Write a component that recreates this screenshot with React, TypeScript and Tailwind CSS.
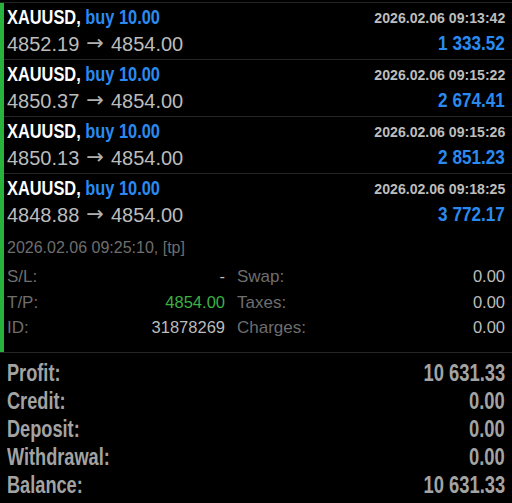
import React from "react";

interface Deal {
  symbol: string;
  side: string;
  open: string;
  close: string;
  time: string;
  profit: string;
}

const deals: Deal[] = [
  { symbol: "XAUUSD", side: "buy 10.00", open: "4852.19", close: "4854.00", time: "2026.02.06 09:13:42", profit: "1 333.52" },
  { symbol: "XAUUSD", side: "buy 10.00", open: "4850.37", close: "4854.00", time: "2026.02.06 09:15:22", profit: "2 674.41" },
  { symbol: "XAUUSD", side: "buy 10.00", open: "4850.13", close: "4854.00", time: "2026.02.06 09:15:26", profit: "2 851.23" },
  { symbol: "XAUUSD", side: "buy 10.00", open: "4848.88", close: "4854.00", time: "2026.02.06 09:18:25", profit: "3 772.17" },
];

const summary = [
  ["Profit:", "10 631.33"],
  ["Credit:", "0.00"],
  ["Deposit:", "0.00"],
  ["Withdrawal:", "0.00"],
  ["Balance:", "10 631.33"],
];

const sans = { fontFamily: '"Liberation Sans", Arial, sans-serif' };

// no condensed face installed, so bold labels get squeezed horizontally
function DealHeader({ deal }: { deal: Deal }) {
  return (
    <>
      <div className="flex items-center justify-between h-[26px] whitespace-nowrap">
        <span className="inline-block origin-left scale-x-[0.84] text-[19.5px] font-bold text-white">
          {deal.symbol}, <span className="text-[#2a8af0]">{deal.side}</span>
        </span>
        <span className="inline-block origin-right scale-x-[0.94] text-[15px] font-bold text-[#bdbdbd]">
          {deal.time}
        </span>
      </div>
      <div className="flex items-center justify-between h-[26px] whitespace-nowrap">
        <span className="text-[20px] text-[#bcbcbc] flex items-center">
          {deal.open}
          <span className="mx-[7px] text-[21px] text-[#b0b0b0]" style={{ fontFamily: '"DejaVu Sans", sans-serif' }}>
            →
          </span>
          {deal.close}
        </span>
        <span className="inline-block origin-right scale-x-[0.88] text-[19.5px] font-bold text-[#2a8af0]">
          {deal.profit}
        </span>
      </div>
    </>
  );
}

function InfoRow({ label, value, valueClass = "text-[#bcbcbc]" }: { label: string; value: string; valueClass?: string }) {
  return (
    <div className="flex justify-between items-center h-[25.5px]">
      <span className="text-[17px] text-[#6e6e6e]">{label}</span>
      <span className={`text-[16.5px] ${valueClass}`}>{value}</span>
    </div>
  );
}

export default function App() {
  const last = deals[deals.length - 1];

  return (
    <div className="w-[512px] h-[503px] bg-black overflow-hidden select-none" style={sans}>
      <div className="mt-[2px] border-t border-[#232323]">
        <div className="border-l-4 border-[#28b43c]">
          {deals.slice(0, 3).map((d) => (
            <div key={d.time} className="h-[57px] pt-[2px] pl-[3px] pr-[7px] border-b border-[#262626]">
              <DealHeader deal={d} />
            </div>
          ))}

          {/* expanded deal */}
          <div className="h-[178px] pt-[2px] pl-[3px] pr-[7px]">
            <DealHeader deal={last} />
            <div className="mt-[7px] h-[26px] flex items-center text-[16px] text-[#6e6e6e]">
              2026.02.06 09:25:10, [tp]
            </div>
            <div className="mt-[3px] grid grid-cols-[218px_1fr] gap-x-[12px]">
              <div>
                <InfoRow label="S/L:" value="-" />
                <InfoRow label="T/P:" value="4854.00" valueClass="text-[#3cb043]" />
                <InfoRow label="ID:" value="31878269" />
              </div>
              <div>
                <InfoRow label="Swap:" value="0.00" />
                <InfoRow label="Taxes:" value="0.00" />
                <InfoRow label="Charges:" value="0.00" />
              </div>
            </div>
          </div>
        </div>
      </div>

      <div className="border-t border-[#262626] pt-[6px] pl-[7px] pr-[7px]">
        {summary.map(([label, value]) => (
          <div key={label} className="flex justify-between items-center h-[28px] whitespace-nowrap text-[23px] font-bold text-[#a3a3a3]">
            <span className="inline-block origin-left scale-x-[0.79]">{label}</span>
            <span className="inline-block origin-right scale-x-[0.8]">{value}</span>
          </div>
        ))}
      </div>
    </div>
  );
}
